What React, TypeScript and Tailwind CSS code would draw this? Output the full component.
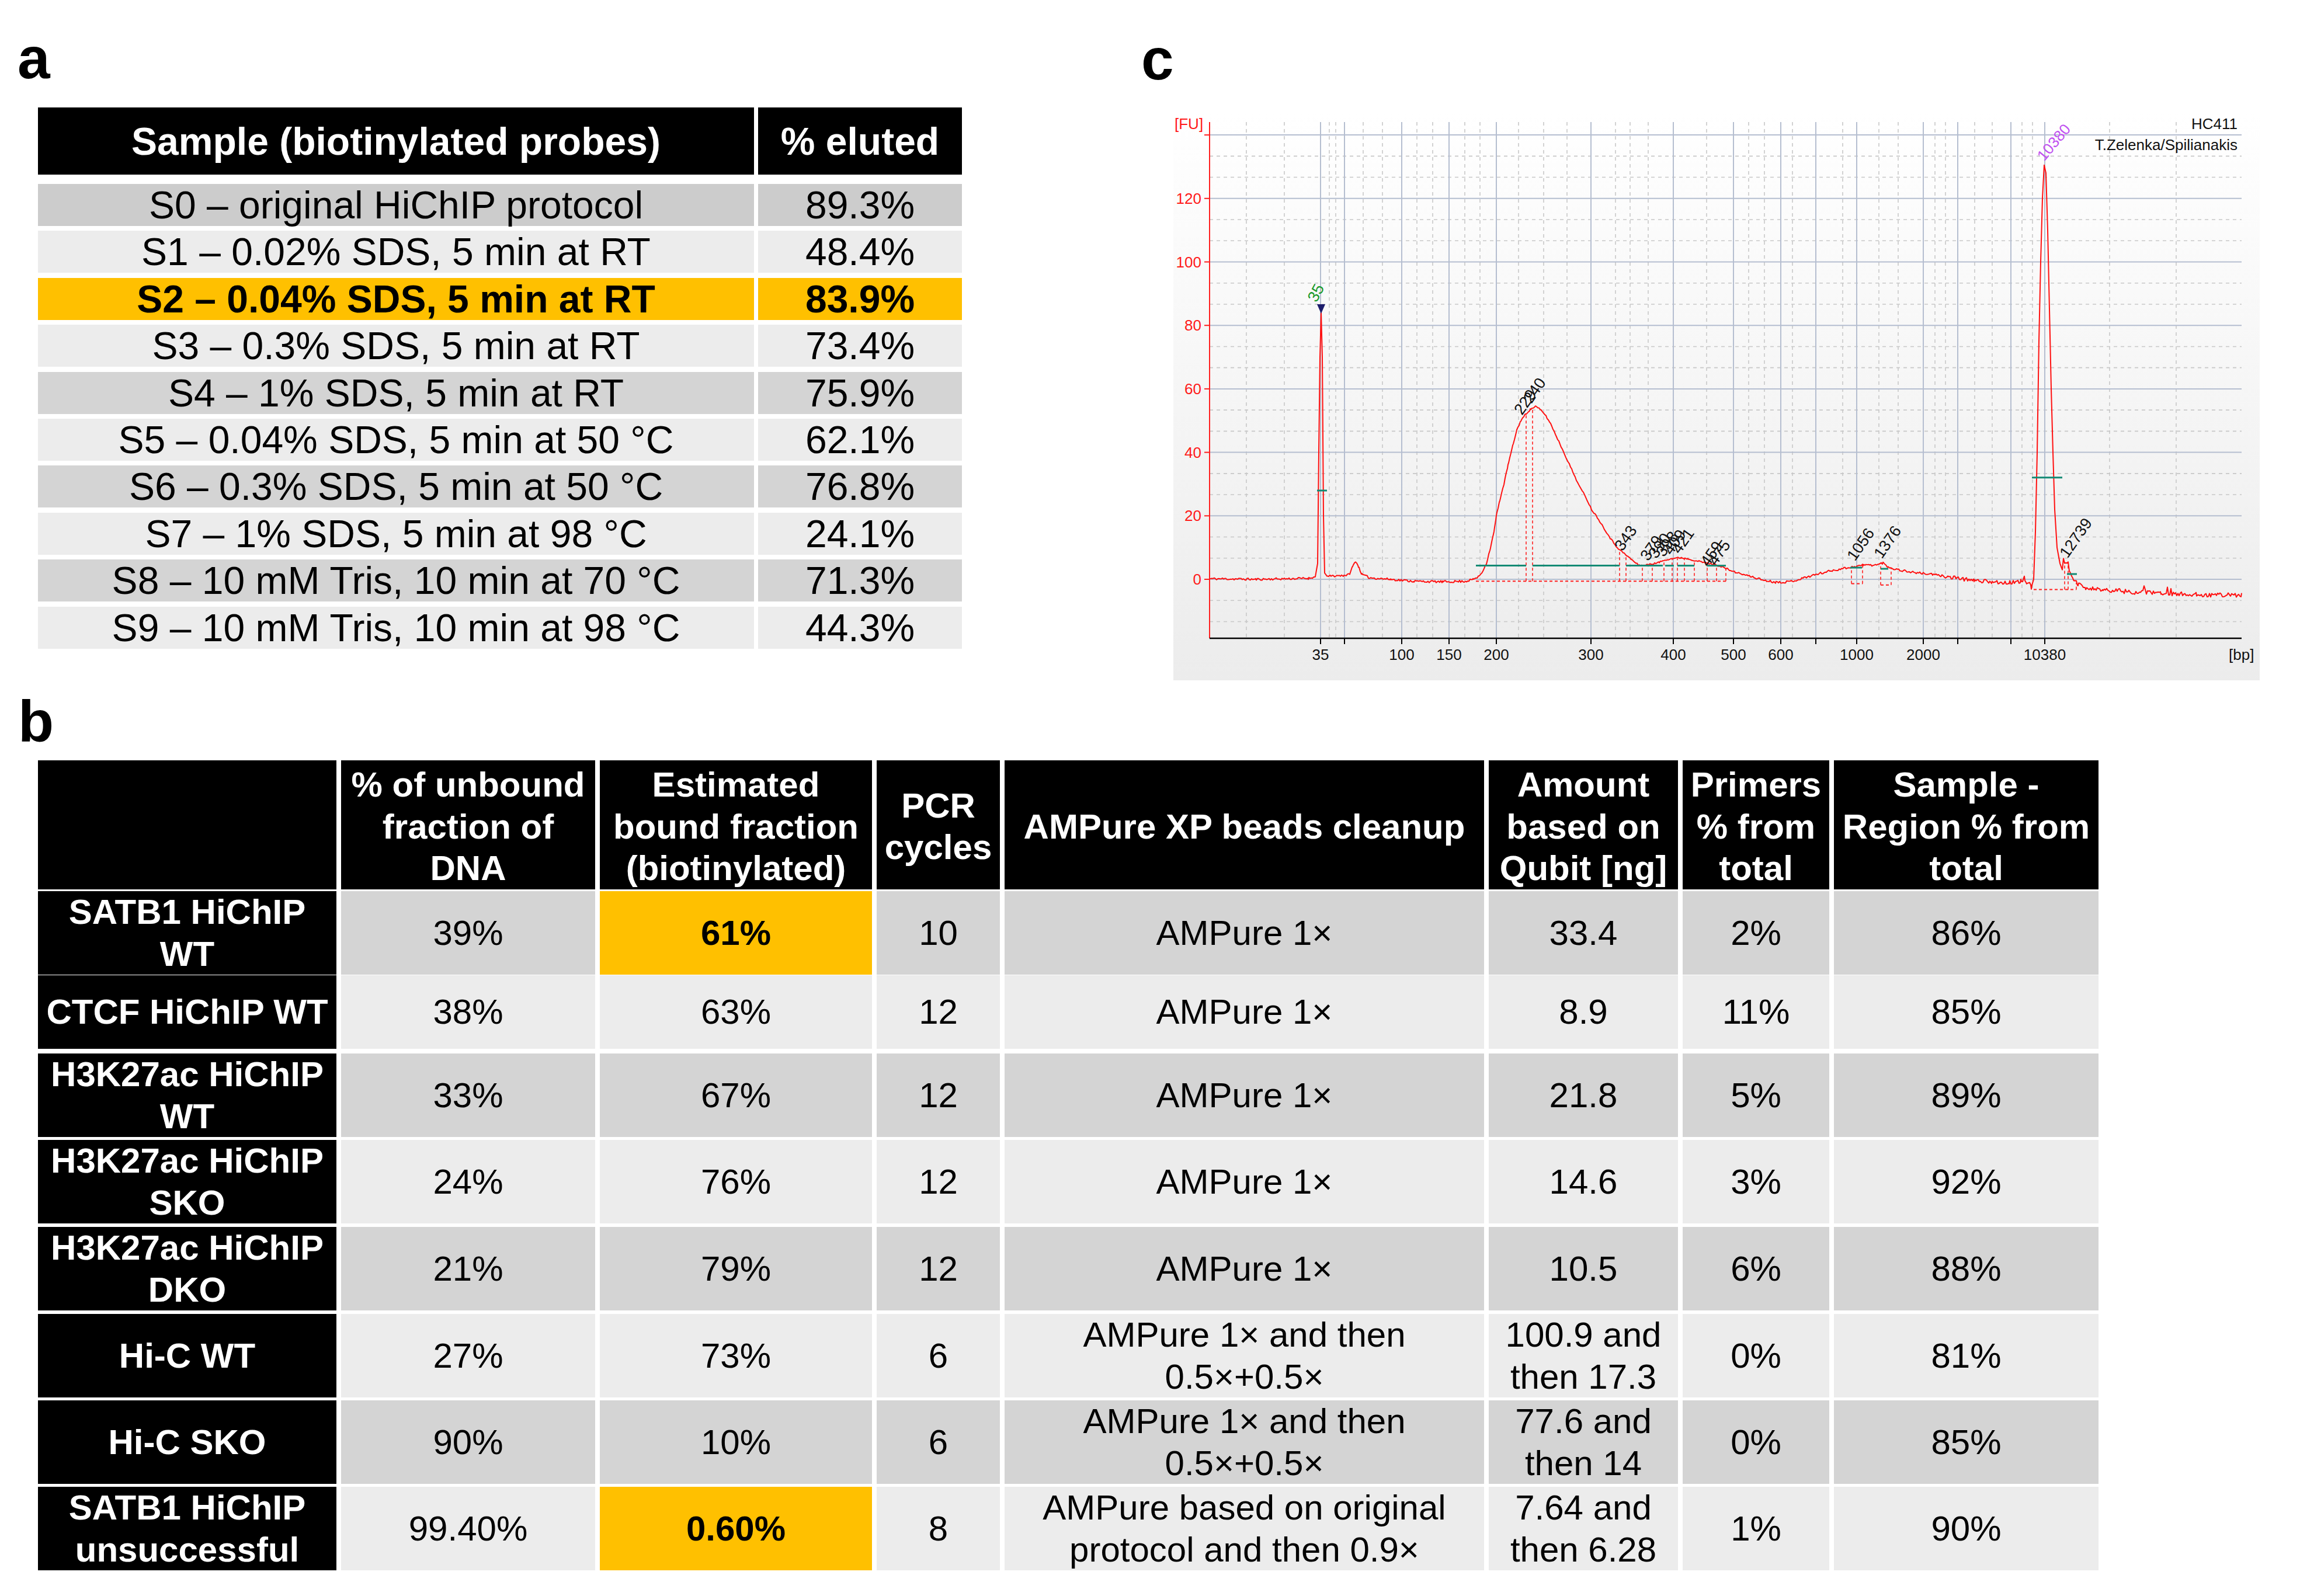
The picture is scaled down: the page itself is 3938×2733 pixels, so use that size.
import React from 'react';

const FONT = "'Liberation Sans', Arial, sans-serif";

type RowA = { label: string; value: string; bg: string; bold?: boolean };

const rowsA: RowA[] = [
  { label: 'S0 – original HiChIP protocol', value: '89.3%', bg: 'bg-[#cccccc]' },
  { label: 'S1 – 0.02% SDS, 5 min at RT', value: '48.4%', bg: 'bg-[#ececec]' },
  { label: 'S2 – 0.04% SDS, 5 min at RT', value: '83.9%', bg: 'bg-[#ffc000]', bold: true },
  { label: 'S3 – 0.3% SDS, 5 min at RT', value: '73.4%', bg: 'bg-[#ececec]' },
  { label: 'S4 – 1% SDS, 5 min at RT', value: '75.9%', bg: 'bg-[#d4d4d4]' },
  { label: 'S5 – 0.04% SDS, 5 min at 50 °C', value: '62.1%', bg: 'bg-[#ececec]' },
  { label: 'S6 – 0.3% SDS, 5 min at 50 °C', value: '76.8%', bg: 'bg-[#d4d4d4]' },
  { label: 'S7 – 1% SDS, 5 min at 98 °C', value: '24.1%', bg: 'bg-[#ececec]' },
  { label: 'S8 – 10 mM Tris, 10 min at 70 °C', value: '71.3%', bg: 'bg-[#d4d4d4]' },
  { label: 'S9 – 10 mM Tris, 10 min at 98 °C', value: '44.3%', bg: 'bg-[#ececec]' },
];

function TableA() {
  return (
    <div className="ml-[35px] mt-[35px] w-[1582px] text-[66px] leading-[72px]">
      <div className="grid h-[115px] grid-cols-[1226px_349px] gap-x-[7px] font-bold text-white">
        <div className="flex items-center justify-center bg-black">Sample (biotinylated probes)</div>
        <div className="flex items-center justify-center bg-black">% eluted</div>
      </div>
      <div className="mt-[16px] grid grid-cols-[1226px_349px] gap-x-[7px] gap-y-[8.4px]">
        {rowsA.map((r) => (
          <React.Fragment key={r.label}>
            <div className={`flex h-[72px] items-center justify-center whitespace-nowrap ${r.bg} ${r.bold ? 'font-bold' : ''}`}>
              {r.label}
            </div>
            <div className={`flex h-[72px] items-center justify-center ${r.bg} ${r.bold ? 'font-bold' : ''}`}>{r.value}</div>
          </React.Fragment>
        ))}
      </div>
    </div>
  );
}

type RowB = { h: string; bg: string; cells: string[][]; hl?: boolean };

const headB: string[][] = [
  [],
  ['% of unbound', 'fraction of', 'DNA'],
  ['Estimated', 'bound fraction', '(biotinylated)'],
  ['PCR', 'cycles'],
  ['AMPure XP beads cleanup'],
  ['Amount', 'based on', 'Qubit [ng]'],
  ['Primers', '% from', 'total'],
  ['Sample -', 'Region % from', 'total'],
];

const rowsB: RowB[] = [
  {
    h: 'h-[136px]',
    bg: 'bg-[#d4d4d4]',
    hl: true,
    cells: [['SATB1 HiChIP', 'WT'], ['39%'], ['61%'], ['10'], ['AMPure 1×'], ['33.4'], ['2%'], ['86%']],
  },
  {
    h: 'h-[126px]',
    bg: 'bg-[#ececec]',
    cells: [['CTCF HiChIP WT'], ['38%'], ['63%'], ['12'], ['AMPure 1×'], ['8.9'], ['11%'], ['85%']],
  },
  {
    h: 'h-[140px]',
    bg: 'bg-[#d4d4d4]',
    cells: [['H3K27ac HiChIP', 'WT'], ['33%'], ['67%'], ['12'], ['AMPure 1×'], ['21.8'], ['5%'], ['89%']],
  },
  {
    h: 'h-[141px]',
    bg: 'bg-[#ececec]',
    cells: [['H3K27ac HiChIP', 'SKO'], ['24%'], ['76%'], ['12'], ['AMPure 1×'], ['14.6'], ['3%'], ['92%']],
  },
  {
    h: 'h-[141px]',
    bg: 'bg-[#d4d4d4]',
    cells: [['H3K27ac HiChIP', 'DKO'], ['21%'], ['79%'], ['12'], ['AMPure 1×'], ['10.5'], ['6%'], ['88%']],
  },
  {
    h: 'h-[140px]',
    bg: 'bg-[#ececec]',
    cells: [['Hi-C WT'], ['27%'], ['73%'], ['6'], ['AMPure 1× and then', '0.5×+0.5×'], ['100.9 and', 'then 17.3'], ['0%'], ['81%']],
  },
  {
    h: 'h-[140px]',
    bg: 'bg-[#d4d4d4]',
    cells: [['Hi-C SKO'], ['90%'], ['10%'], ['6'], ['AMPure 1× and then', '0.5×+0.5×'], ['77.6 and', 'then 14'], ['0%'], ['85%']],
  },
  {
    h: 'h-[140px]',
    bg: 'bg-[#ececec]',
    hl: true,
    cells: [
      ['SATB1 HiChIP', 'unsuccessful'],
      ['99.40%'],
      ['0.60%'],
      ['8'],
      ['AMPure based on original', 'protocol and then 0.9×'],
      ['7.64 and', 'then 6.28'],
      ['1%'],
      ['90%'],
    ],
  },
];

function Lines({ lines }: { lines: string[] }) {
  return (
    <div className="whitespace-nowrap text-center">
      {lines.map((l, i) => (
        <div key={i}>{l}</div>
      ))}
    </div>
  );
}

const colsB = 'grid grid-cols-[511px_435px_466px_211px_821px_324px_251px_453px] gap-x-[8px]';

function TableB() {
  return (
    <div className="ml-[65px] mt-[17px] w-[3528px] text-[60px] leading-[71.5px]">
      <div className={`${colsB} h-[209px] font-bold text-white`}>
        {headB.map((c, i) => (
          <div key={i} className="flex items-center justify-center bg-black pt-[6px]">
            <Lines lines={c} />
          </div>
        ))}
      </div>
      <div className="mt-[15px] flex flex-col gap-y-[8px]">
        {rowsB.map((r, ri) => (
          <div key={ri} className={`${colsB} ${r.h}`}>
            {r.cells.map((c, ci) => {
              let cls = r.bg;
              if (ci === 0) cls = 'bg-black font-bold text-white';
              else if (ci === 2 && r.hl) cls = 'bg-[#ffc000] font-bold';
              return (
                <div key={ci} className={`flex items-center justify-center ${cls}`}>
                  <Lines lines={c} />
                </div>
              );
            })}
          </div>
        ))}
      </div>
    </div>
  );
}

/* ---------- electropherogram ---------- */

const yOf = (v: number) => 992 - v * 5.435;

const keys: [number, number][] = [
  [2071, 0.2], [2150, 0], [2240, 0.3], [2252, 0.8], [2256, 5], [2258, 40], [2260, 70], [2262, 84], [2264, 70],
  [2266, 20], [2268, 2], [2272, 1], [2300, 1.2], [2310, 1.5], [2316, 4], [2321, 5.8], [2326, 4], [2332, 1.5],
  [2345, 0.5], [2380, 0], [2420, -0.6], [2470, -0.8], [2510, -0.6], [2522, 0], [2530, 0.6], [2537, 2], [2545, 5],
  [2552, 10], [2558, 15], [2562, 20], [2568, 25], [2575, 30], [2582, 36], [2590, 42], [2597, 47], [2604, 50],
  [2612, 52], [2620, 53.5], [2629, 54.5], [2637, 53.5], [2645, 52], [2655, 49], [2665, 45], [2675, 41], [2685, 37],
  [2695, 33], [2705, 29], [2715, 26], [2725, 22], [2735, 19.5], [2745, 16.5], [2757, 13], [2767, 10.5], [2775, 9],
  [2785, 7.5], [2795, 6], [2805, 4.5], [2815, 4.4], [2828, 4.8], [2840, 5.3], [2852, 6.2], [2865, 6.6], [2878, 6.8],
  [2890, 6.5], [2905, 5.8], [2920, 5.2], [2935, 4.7], [2948, 4.0], [2958, 3.2], [2970, 2.3], [2985, 1.5], [3000, 0.8],
  [3020, -0.3], [3040, -0.9], [3060, -0.8], [3075, -0.3], [3095, 0.8], [3115, 1.8], [3135, 2.7], [3155, 3.4],
  [3175, 4.0], [3190, 4.5], [3205, 4.5], [3215, 4.6], [3224, 5.2], [3232, 4.0], [3245, 3.2], [3265, 2.5], [3285, 2.0],
  [3310, 1.5], [3335, 0.8], [3355, 0.2], [3380, -0.3], [3410, -0.8], [3440, -1.0], [3460, -0.9], [3466, 0.5],
  [3470, -1.0], [3478, -2.5], [3482, 0], [3485, 15], [3488, 40], [3491, 75], [3494, 100], [3497, 120], [3500, 130.5],
  [3503, 128], [3506, 110], [3509, 85], [3512, 60], [3515, 40], [3518, 22], [3522, 10], [3527, 5], [3531, 3],
  [3535, 5.5], [3538, 4.5], [3541, 5], [3545, 1.5], [3550, -0.5], [3558, -1.5], [3570, -2.8], [3600, -3.3],
  [3650, -4], [3700, -4.5], [3760, -4.8], [3838, -5],
];

function baseAt(x: number) {
  for (let i = 1; i < keys.length; i++) {
    if (x <= keys[i][0]) {
      const [x0, v0] = keys[i - 1];
      const [x1, v1] = keys[i];
      return v0 + ((v1 - v0) * (x - x0)) / (x1 - x0);
    }
  }
  return keys[keys.length - 1][1];
}

function mulberry32(a: number) {
  return () => {
    a |= 0;
    a = (a + 0x6d2b79f5) | 0;
    let t = Math.imul(a ^ (a >>> 15), 1 | a);
    t = (t + Math.imul(t ^ (t >>> 7), 61 | t)) ^ t;
    return ((t ^ (t >>> 14)) >>> 0) / 4294967296;
  };
}

function noiseAmp(x: number) {
  if (x > 2248 && x < 2274) return 0;
  if (x > 3478 && x < 3533) return 0;
  if (x < 2520) return 0.35;
  if (x < 3000) return 0.25;
  if (x < 3330) return 0.35;
  if (x < 3480) return 0.6;
  return 0.7;
}

const tracePath = (() => {
  const rand = mulberry32(11);
  const xs = new Set<number>();
  for (let x = 2071; x <= 3838; x += 2) xs.add(x);
  keys.forEach((k) => xs.add(k[0]));
  const sorted = [...xs].sort((a, b) => a - b);
  let d = '';
  sorted.forEach((x, i) => {
    const amp = noiseAmp(x);
    let n = (rand() - 0.5) * 2 * amp;
    if (amp > 0.5 && rand() < 0.06) n += (rand() - 0.3) * 3;
    d += `${i ? 'L' : 'M'}${x} ${yOf(baseAt(x) + n).toFixed(1)}`;
  });
  return d;
})();

const solidX = [2261, 2302, 2400, 2481, 2562, 2724, 2865, 2968, 3049, 3109, 3179, 3293, 3352, 3443, 3501];
const dashedX = [
  2134, 2199, 2276, 2287, 2334, 2367, 2426, 2453, 2508, 2534, 2600, 2643, 2683, 2766, 2791, 2822, 2922, 2994, 3021,
  3069, 3155, 3217, 3250, 3313, 3331, 3381, 3411, 3462, 3480, 3612, 3726,
];
const xLabels: [number, string][] = [
  [2261, '35'], [2400, '100'], [2481, '150'], [2562, '200'], [2724, '300'], [2865, '400'], [2968, '500'],
  [3049, '600'], [3179, '1000'], [3293, '2000'], [3501, '10380'],
];
const solidV = [0, 20, 40, 60, 80, 100, 120, 140];
const dashedV: number[] = [];
for (let k = -2; k <= 20; k++) if (k % 3 !== 0) dashedV.push((k * 20) / 3);

const greenSegs: [number, number, number][] = [
  [2255, 2272, 840], [2527, 2613, 968.6], [2624, 2773, 968.6], [2784, 2847, 968.6], [2851, 2866, 968.6],
  [2872, 2901, 968.6], [2923, 2955, 968.6], [3168, 3188, 972], [3220, 3233, 974], [3479, 3531, 817.7],
  [3539, 3556, 983],
];
const redVerts: [number, number][] = [
  [2613, 995.3], [2624, 995.3], [2773, 995.3], [2784, 995.3], [2812, 995.3], [2829, 995.3], [2849, 995.3],
  [2863, 995.3], [2872, 995.3], [2884, 995.3], [2901, 995.3], [2923, 995.3], [2939, 995.3], [2955, 995.3],
  [3170, 999.6], [3189, 999.6], [3220, 1001.8], [3238, 1001.8], [3535, 1009.4], [3541, 1009.4], [3555, 1009.4],
];
const redBases: [number, number, number][] = [
  [2527, 2955, 995.3], [3170, 3189, 999.6], [3220, 3238, 1001.8], [3482, 3555, 1009.4],
];
const peakLabels: [number, number, string][] = [
  [2606, 712, '229'], [2622, 692, '240'], [2778, 945, '343'], [2822, 962, '379'], [2836, 958, '390'],
  [2849, 955, '398'], [2862, 952, '409'], [2876, 950, '421'], [2925, 972, '459'], [2938, 970, '475'],
  [3176, 962, '1056'], [3222, 958, '1376'], [3540, 957, '12739'],
];

function Electropherogram() {
  return (
    <svg width={1860} height={971} viewBox="2009 194 1860 971" fontFamily={FONT}>
      <defs>
        <linearGradient id="panelBg" x1="0" y1="0" x2="0" y2="1">
          <stop offset="0" stopColor="#ffffff" />
          <stop offset="1" stopColor="#ececec" />
        </linearGradient>
      </defs>
      <rect x={2009} y={194} width={1860} height={971} fill="url(#panelBg)" />

      {dashedV.map((v) => (
        <line key={`dh${v}`} x1={2071} x2={3838} y1={yOf(v)} y2={yOf(v)} stroke="#c8c8c8" strokeWidth={1.6} strokeDasharray="6 6" />
      ))}
      {dashedX.map((x) => (
        <line key={`dv${x}`} x1={x} x2={x} y1={209} y2={1093} stroke="#c8c8c8" strokeWidth={1.6} strokeDasharray="6 6" />
      ))}
      {solidV.map((v) => (
        <line key={`sh${v}`} x1={2071} x2={3838} y1={yOf(v)} y2={yOf(v)} stroke="#b5bed0" strokeWidth={2} />
      ))}
      {solidX.map((x) => (
        <line key={`sv${x}`} x1={x} x2={x} y1={209} y2={1093} stroke="#b5bed0" strokeWidth={2} />
      ))}

      {/* axes */}
      <line x1={2071} x2={2071} y1={209} y2={1093} stroke="#ff2020" strokeWidth={2} />
      <line x1={2071} x2={3838} y1={1093} y2={1093} stroke="#000" strokeWidth={2.5} />
      {solidV.map((v) => (
        <line key={`yt${v}`} x1={2062} x2={2071} y1={yOf(v)} y2={yOf(v)} stroke="#ff2020" strokeWidth={2} />
      ))}
      {solidX.map((x) => (
        <line key={`xt${x}`} x1={x} x2={x} y1={1093} y2={1103} stroke="#000" strokeWidth={2} />
      ))}
      {solidV.slice(0, 7).map((v) => (
        <text key={`yl${v}`} x={2057} y={yOf(v) + 9} fill="#ff1a1a" fontSize={26} textAnchor="end">
          {v}
        </text>
      ))}
      <text x={2011} y={221} fill="#ff1a1a" fontSize={26}>
        [FU]
      </text>
      {xLabels.map(([x, t]) => (
        <text key={`xl${t}`} x={x} y={1130} fontSize={26} textAnchor="middle" fill="#111">
          {t}
        </text>
      ))}
      <text x={3816} y={1130} fontSize={26} fill="#111">
        [bp]
      </text>
      <text x={3831} y={221} fontSize={26} textAnchor="end" fill="#111">
        HC411
      </text>
      <text x={3831} y={257} fontSize={26} textAnchor="end" fill="#111">
        T.Zelenka/Spilianakis
      </text>

      {/* peak annotations */}
      <line x1={2527} x2={2955} y1={995.3} y2={995.3} stroke="#ff2020" strokeWidth={2} strokeDasharray="5 4" />
      {redBases.slice(1).map(([a, b, y]) => (
        <line key={`rb${a}`} x1={a} x2={b} y1={y} y2={y} stroke="#ff2020" strokeWidth={2} strokeDasharray="5 4" />
      ))}
      {redVerts.map(([x, y]) => (
        <line key={`rv${x}`} x1={x} x2={x} y1={y} y2={yOf(baseAt(x))} stroke="#ff2020" strokeWidth={1.6} strokeDasharray="5 4" />
      ))}

      <path d={tracePath} fill="none" stroke="#ff1010" strokeWidth={2} strokeLinejoin="round" />

      {greenSegs.map(([a, b, y]) => (
        <line key={`g${a}`} x1={a} x2={b} y1={y} y2={y} stroke="#138a74" strokeWidth={3} />
      ))}

      <polygon points="2255,521 2269,521 2262,537" fill="#1c1c6b" />
      <text x={2254} y={519} fontSize={27} fill="#1a9a2a" transform="rotate(-62 2254 519)">
        35
      </text>
      <text x={3500} y={277} fontSize={26} fill="#c050f0" transform="rotate(-50 3500 277)">
        10380
      </text>
      {peakLabels.map(([x, y, t]) => (
        <text key={`pl${t}`} x={x} y={y} fontSize={27} fill="#111" transform={`rotate(-55 ${x} ${y})`}>
          {t}
        </text>
      ))}
    </svg>
  );
}

export default function App() {
  return (
    <div className="h-[2733px] w-[3938px] overflow-hidden bg-white font-['Liberation_Sans',Arial,sans-serif] text-black">
      <div className="flex h-[1165px]">
        <div className="w-[1954px] shrink-0 pl-[30px]">
          <div className="mt-[49px] text-[100px] font-bold leading-[100px]">a</div>
          <TableA />
        </div>
        <div className="flex-1">
          <div className="mt-[51px] text-[100px] font-bold leading-[100px]">c</div>
          <div className="ml-[55px] mt-[43px] h-[971px] w-[1860px]">
            <Electropherogram />
          </div>
        </div>
      </div>
      <div className="ml-[31px] mt-[20px] text-[100px] font-bold leading-[100px]">b</div>
      <TableB />
    </div>
  );
}
